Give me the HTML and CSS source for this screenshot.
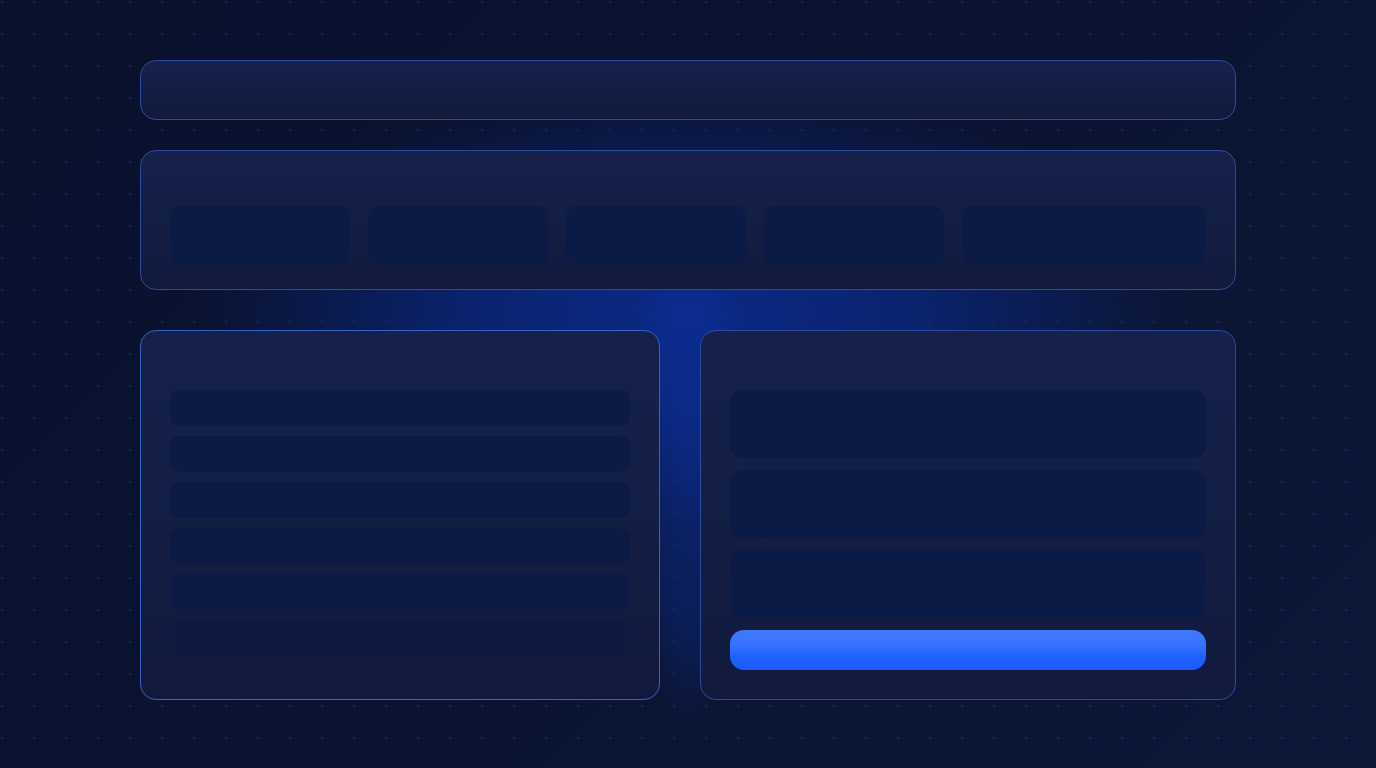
FILE: index.html
```html
<!DOCTYPE html>
<html lang="en">
<head>
<meta charset="utf-8">
<title>Dashboard skeleton</title>
<link rel="stylesheet" href="styles.css">
</head>
<body>
<div class="glow"></div>
<main class="layout">
  <header class="card topbar"></header>
  <section class="card stats">
    <div class="tile"></div>
    <div class="tile"></div>
    <div class="tile"></div>
    <div class="tile"></div>
    <div class="tile"></div>
  </section>
  <div class="bottom">
    <section class="card list active">
      <div class="row"></div>
      <div class="row"></div>
      <div class="row"></div>
      <div class="row"></div>
      <div class="row"></div>
      <div class="row"></div>
    </section>
    <section class="card form">
      <div class="field"></div>
      <div class="field"></div>
      <div class="field"></div>
      <div class="button"></div>
    </section>
  </div>
</main>
</body>
</html>
```

FILE: styles.css
```css
* { box-sizing: border-box; }
html, body { margin: 0; height: 100%; }
body {
  position: relative;
  overflow: hidden;
  font-family: "Inter", "Liberation Sans", sans-serif;
  background-color: #0a1230;
  background-image:
    radial-gradient(circle at 2px 2px, rgba(60, 90, 170, 0.28) 0.9px, transparent 1.4px),
    linear-gradient(135deg, #09112d 0%, #0a1331 45%, #0c1838 100%);
  background-size: 32px 32px, 100% 100%;
}
.glow {
  position: absolute;
  inset: 0;
  pointer-events: none;
  background:
    radial-gradient(ellipse 60px 260px at 688px 470px, rgba(12, 50, 170, 0.5) 0%, rgba(12, 50, 170, 0.3) 60%, transparent 100%),
    radial-gradient(ellipse 500px 220px at 688px 310px, rgba(11, 45, 150, 0.85) 0%, rgba(11, 45, 150, 0.6) 45%, rgba(11, 45, 150, 0.2) 80%, transparent 100%);
}
.layout {
  position: relative;
  width: 1096px;
  margin: 60px auto 0;
  display: flex;
  flex-direction: column;
  gap: 30px;
}
.card {
  border: 1.5px solid #2d4b9e;
  border-radius: 16px;
  background: linear-gradient(180deg, #15214b 0%, #141f47 40%, #111a3c 100%);
}
.topbar { height: 60px; }
.stats {
  height: 140px;
  padding: 55px 29px 0;
  display: grid;
  grid-template-columns: 180px 180px 180px 180px 1fr;
  gap: 18px;
  align-items: start;
}
.tile {
  height: 60px;
  border-radius: 10px;
  background: #0c1a46;
}
.bottom {
  display: grid;
  grid-template-columns: 520px 1fr;
  gap: 40px;
  margin-top: 10px;
}
.list, .form {
  height: 370px;
  padding: 59px 29px 0;
  display: flex;
  flex-direction: column;
}
.active { border-color: #3a62c6; }
.list { gap: 10px; }
.row {
  height: 36px;
  border-radius: 9px;
  background: #0c1a46;
}
.row:nth-child(5) { opacity: 0.85; }
.row:nth-child(6) { opacity: 0.55; }
.form { gap: 12px; }
.field {
  height: 68px;
  border-radius: 12px;
  background: #0c1a46;
}
.button {
  height: 40px;
  border-radius: 14px;
  background: linear-gradient(180deg, #3e7bff 0%, #3874ff 35%, #1d5fff 70%, #185bff 100%);
}
```
